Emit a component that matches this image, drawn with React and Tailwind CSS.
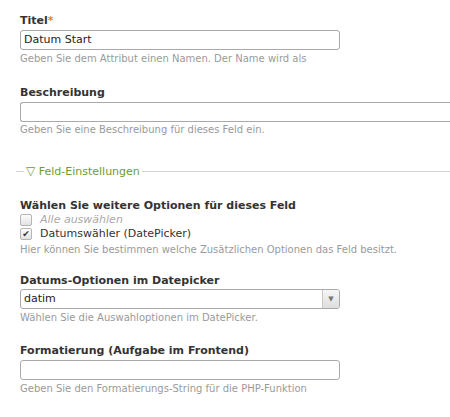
import React from 'react'

const font = { fontFamily: '"DejaVu Sans", Verdana, sans-serif' }

function Label({ children, className = '' }) {
  return <div className={`text-[11px] font-bold leading-[14px] text-[#333] ${className}`}>{children}</div>
}

function Help({ children, className = 'mt-[3px]' }) {
  return <div className={`text-[10px] leading-[12px] text-[#9a9a9a] whitespace-nowrap ${className}`}>{children}</div>
}

function Box({ checked }) {
  return (
    <span className="inline-flex h-[12px] w-[12px] items-center justify-center rounded-[2px] border border-[#b5b5b5] bg-gradient-to-b from-[#fdfdfd] to-[#e2e2e2] text-[9px] leading-none text-[#333]">
      {checked ? '✔' : ''}
    </span>
  )
}

export default function App() {
  return (
    <div className="h-[417px] w-[450px] overflow-hidden bg-white pl-[20px] pt-[14px]" style={font}>
      <Label>
        Titel<span className="text-[#e8812c]">*</span>
      </Label>
      <div className="mt-[2px] flex h-[20px] w-[320px] items-center rounded-[3px] border border-[#a9a9a9] px-[3px] text-[11px] text-[#222]">
        Datum Start
      </div>
      <Help>Geben Sie dem Attribut einen Namen. Der Name wird als</Help>

      <Label className="mt-[21px]">Beschreibung</Label>
      <div className="mt-[2px] h-[20px] w-[440px] rounded-l-[3px] border border-r-0 border-[#a9a9a9]" />
      <Help className="mt-[2px]">Geben Sie eine Beschreibung für dieses Feld ein.</Help>

      <div className="-ml-[4px] mt-[28px] flex items-center">
        <span className="h-px w-[8px] bg-[#d4d4d4]" />
        <span className="px-[2px] text-[11px] leading-[14px] text-[#6a9e2f]">
          <span className="text-[12px]">▽</span> Feld-Einstellungen
        </span>
        <span className="h-px flex-1 bg-[#d4d4d4]" />
      </div>

      <Label className="mt-[20px]">Wählen Sie weitere Optionen für dieses Feld</Label>
      <div className="flex h-[14px] items-center gap-[8px]">
        <Box />
        <span className="text-[11px] italic text-[#aaa]">Alle auswählen</span>
      </div>
      <div className="flex h-[14px] items-center gap-[8px]">
        <Box checked />
        <span className="text-[11px] text-[#333]">Datumswähler (DatePicker)</span>
      </div>
      <Help>Hier können Sie bestimmen welche Zusätzlichen Optionen das Feld besitzt.</Help>

      <Label className="mt-[18px]">Datums-Optionen im Datepicker</Label>
      <div className="mt-[1px] flex h-[20px] w-[320px] items-stretch overflow-hidden rounded-[3px] border border-[#a9a9a9] text-[11px] text-[#222]">
        <div className="flex flex-1 items-center px-[3px]">datim</div>
        <div className="flex w-[17px] items-center justify-center border-l border-[#c8c8c8] bg-gradient-to-b from-[#f6f6f6] to-[#dedede] text-[7px] text-[#777]">
          ▼
        </div>
      </div>
      <Help>Wählen Sie die Auswahloptionen im DatePicker.</Help>

      <Label className="mt-[20px]">Formatierung (Aufgabe im Frontend)</Label>
      <div className="mt-[2px] h-[20px] w-[320px] rounded-[3px] border border-[#a9a9a9]" />
      <Help>Geben Sie den Formatierungs-String für die PHP-Funktion</Help>
    </div>
  )
}
